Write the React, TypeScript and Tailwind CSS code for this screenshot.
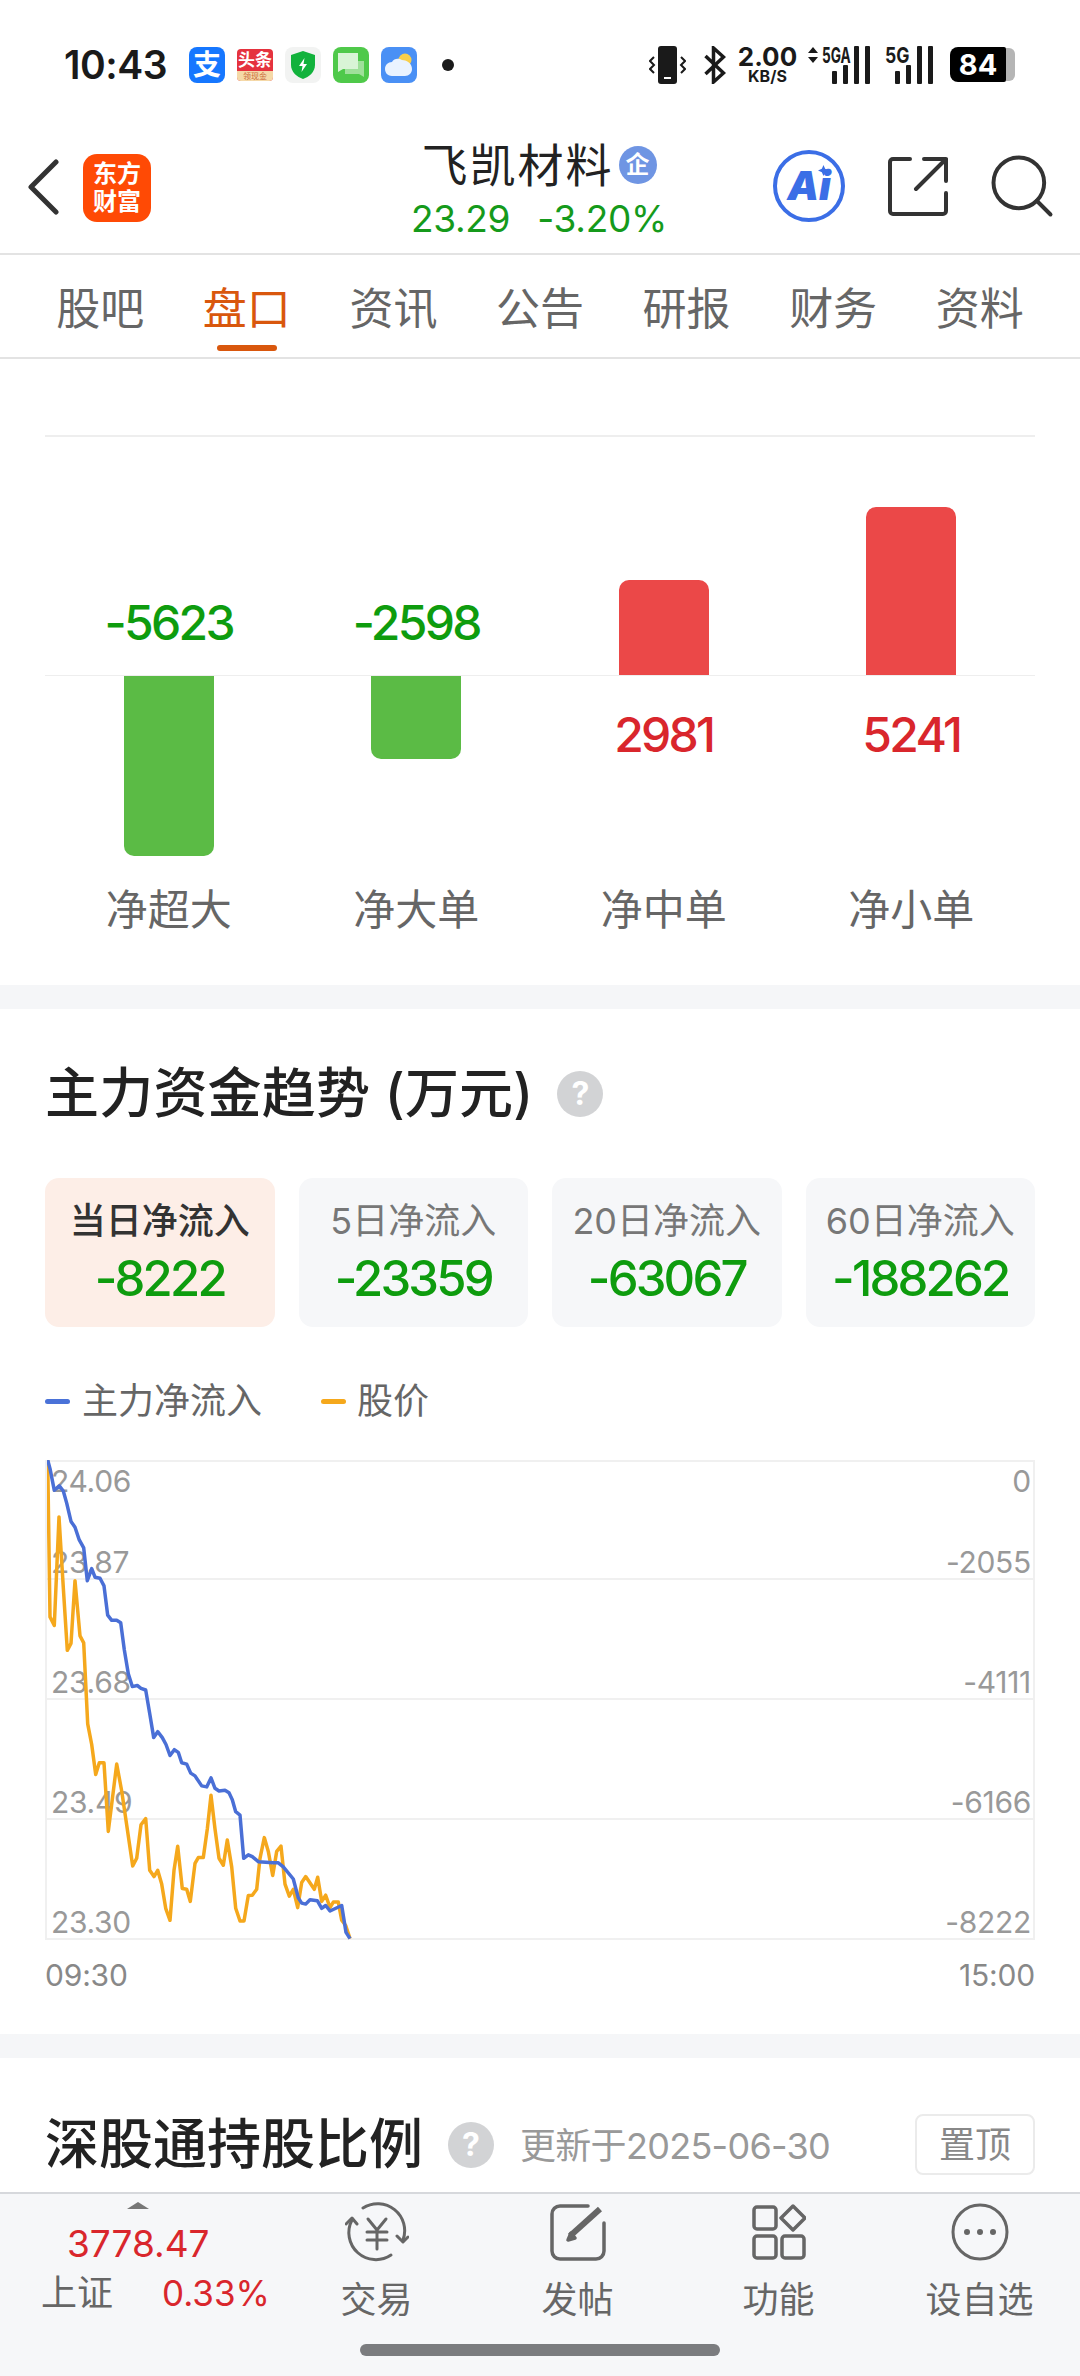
import React from 'react';
import { Search } from 'lucide-react';

const TABS = ['股吧', '盘口', '资讯', '公告', '研报', '财务', '资料'];

const FLOWS = [
  { label: '净超大', value: -5623, height: 180 },
  { label: '净大单', value: -2598, height: 83 },
  { label: '净中单', value: 2981, height: 95 },
  { label: '净小单', value: 5241, height: 168 },
];

const CARDS = [
  { label: '当日净流入', value: '-8222', active: true },
  { label: '5日净流入', value: '-23359', active: false },
  { label: '20日净流入', value: '-63067', active: false },
  { label: '60日净流入', value: '-188262', active: false },
];

const NET_LINE = '78,60 85,85 98,148 113,135 125,150 135,185 148,238 160,255 172,290 186,315 197,410 210,375 220,400 235,403 247,425 258,510 270,525 285,525 297,532 308,610 320,680 332,717 347,714 358,722 372,727 385,800 396,865 408,848 422,865 433,885 445,917 458,900 470,908 480,938 495,942 507,968 520,976 540,1005 555,1008 568,982 580,1012 592,1020 610,1018 622,1025 632,1045 642,1080 655,1090 666,1215 680,1205 692,1210 710,1225 755,1228 770,1228 785,1240 815,1275 830,1330 840,1345 852,1348 865,1335 887,1338 900,1360 912,1352 925,1368 960,1352 973,1430 985,1448';
const PRICE_LINE = '78,60 85,515 98,540 112,225 125,430 137,612 148,592 160,410 175,570 186,590 198,825 210,885 222,972 233,938 247,938 260,1137 285,942 300,1020 333,1237 345,1215 358,1118 372,1100 384,1250 397,1268 408,1250 420,1290 432,1360 445,1395 457,1250 468,1180 482,1303 495,1305 506,1340 520,1230 530,1213 545,1213 557,1130 568,1032 580,1130 592,1215 605,1235 617,1162 630,1240 642,1360 655,1397 667,1397 680,1323 692,1322 705,1305 715,1215 728,1155 740,1195 753,1265 765,1195 778,1180 790,1290 803,1325 815,1305 828,1358 840,1285 852,1268 878,1305 888,1270 900,1340 912,1322 925,1358 935,1342 950,1342 960,1395 972,1410 985,1448';

const toChart = (line: string) =>
  line
    .split(' ')
    .map((p) => {
      const [x, y] = p.split(',').map(Number);
      return `${((x - 76) / 3).toFixed(1)},${((y - 60) / 2.9).toFixed(1)}`;
    })
    .join(' ');

const Signal = () => (
  <svg width="38" height="38" viewBox="0 0 38 38" fill="#1a1a1a">
    <rect x="0" y="25" width="5" height="13" rx="1" />
    <rect x="11" y="19" width="5" height="19" rx="1" />
    <rect x="22" y="0" width="5" height="38" rx="1" />
    <rect x="33" y="0" width="5" height="38" rx="1" />
  </svg>
);

const StatusBar = () => (
  <div className="h-[131px] relative flex items-center pl-[64px] pr-[65px] pb-[2px]">
    <span className="text-[39px] font-semibold text-[#1a1a1a] leading-none w-[125px] tracking-[-0.5px]">10:43</span>
    <div className="flex items-center gap-[12px]">
      <div className="w-[36px] h-[36px] rounded-[8px] bg-[#1677ff] text-white text-[28px] font-bold leading-none flex items-center justify-center">支</div>
      <div className="w-[36px] h-[32px] rounded-[4px] bg-[#e5323e] text-white flex flex-col items-center overflow-hidden">
        <span className="text-[17px] font-bold leading-[22px]">头条</span>
        <span className="w-full bg-[#f5d9a8] text-[#c96a3a] text-[8px] leading-[10px] text-center">领现金</span>
      </div>
      <div className="w-[36px] h-[36px] rounded-[8px] bg-[#f2f3f2] flex items-center justify-center">
        <svg width="26" height="30" viewBox="0 0 26 30">
          <path d="M13 1 L25 5 V15 C25 22 19 27 13 29 C7 27 1 22 1 15 V5 Z" fill="#12b23c" />
          <path d="M14.5 8 L9 16 H12.5 L11.5 22 L17 14 H13.5 Z" fill="#fff" />
        </svg>
      </div>
      <div className="w-[36px] h-[36px] rounded-[8px] bg-[#4fc94a] flex items-center justify-center">
        <svg width="28" height="26" viewBox="0 0 28 26">
          <path d="M8 9 H27 V20 L27 25 L22 22 H8 Z" fill="#9fe09a" />
          <path d="M1 1 H21 V17 H6 L1 20 Z" fill="#d9f4d6" />
        </svg>
      </div>
      <div className="w-[36px] h-[36px] rounded-[8px] bg-[#4a90f5] flex items-center justify-center">
        <svg width="30" height="26" viewBox="0 0 30 26">
          <circle cx="21" cy="8" r="6.5" fill="#f8cf4c" />
          <path d="M8 24 C3 24 1 20 1 17 C1 13 4 10 8 10 C10 6 15 6 18 8 C22 8 28 11 28 17 C28 21 25 24 21 24 Z" fill="#eaf3ff" />
        </svg>
      </div>
      <div className="ml-[13px] w-[12px] h-[12px] rounded-full bg-[#1a1a1a]" />
    </div>
    <div className="ml-auto flex items-center">
      <svg width="37" height="38" viewBox="0 0 37 38">
        <rect x="9" y="0" width="19" height="38" rx="3" fill="#1a1a1a" />
        <rect x="15" y="31" width="7" height="2" fill="#fff" />
        <path d="M5 11 L1 15 L5 19 L1 23 L5 27 M32 11 L36 15 L32 19 L36 23 L32 27" stroke="#1a1a1a" strokeWidth="2" fill="none" />
      </svg>
      <svg className="ml-[17px]" width="23" height="38" viewBox="0 0 22 38">
        <path d="M2 10 L20 27 L10 36 V2 L20 11 L2 28" stroke="#1a1a1a" strokeWidth="3.5" fill="none" />
      </svg>
      <div className="ml-[13px] w-[57px] flex flex-col items-center text-[#1a1a1a] font-bold">
        <span className="text-[26px] leading-[23px]">2.00</span>
        <span className="text-[16px] leading-[16px]">KB/S</span>
      </div>
      <div className="ml-[12px] relative w-[62px] h-[38px]">
        <svg className="absolute left-0 top-[1px]" width="10" height="16" viewBox="0 0 10 16" fill="#1a1a1a">
          <path d="M5 0 L10 6 H0 Z M0 10 H10 L5 16 Z" />
        </svg>
        <span className="absolute left-[14px] top-[-3px] text-[22px] leading-[24px] font-bold origin-left scale-x-[0.62] text-[#1a1a1a]">5GA</span>
        <div className="absolute left-[24px] top-0"><Signal /></div>
      </div>
      <div className="ml-[15px] relative w-[48px] h-[38px]">
        <span className="absolute left-0 top-[-3px] text-[22px] leading-[24px] font-bold origin-left scale-x-[0.8] text-[#1a1a1a]">5G</span>
        <div className="absolute left-[10px] top-0"><Signal /></div>
      </div>
      <div className="ml-[17px] flex items-center">
        <div className="w-[56px] h-[35px] bg-black rounded-l-[8px] rounded-r-[2px] text-white text-[29px] font-bold leading-none flex items-center justify-center">84</div>
        <div className="w-[9px] h-[33px] bg-[#b5b5b5] rounded-r-[6px]" />
      </div>
    </div>
  </div>
);

const Header = () => (
  <div className="h-[124px] relative flex items-center border-b-2 border-[#e3e3e3] pb-[4px]">
    <svg className="ml-[27px] mt-[-6px] shrink-0" width="32" height="56" viewBox="0 0 32 56" fill="none" stroke="#333" strokeWidth="5" strokeLinecap="round" strokeLinejoin="round">
      <path d="M29 3 L4 28 L29 53" />
    </svg>
    <div className="ml-[24px] mt-[-4px] w-[68px] h-[68px] rounded-[14px] bg-[#ff4a05] text-white font-bold text-[24px] leading-[28px] flex flex-col items-center justify-center">
      <span>东方</span>
      <span>财富</span>
    </div>
    <div className="ml-[261px] w-[254px] flex flex-col items-center">
      <div className="flex items-center">
        <span className="text-[46px] leading-[54px] text-[#222] tracking-[2px]">飞凯材料</span>
        <span className="ml-[5px] w-[38px] h-[38px] rounded-full bg-[#6f95e3] text-white text-[24px] font-bold leading-none flex items-center justify-center">企</span>
      </div>
      <div className="flex items-center gap-[27px] text-[37px] mt-[3px] leading-[48px] text-[#159a1b] tracking-[-0.3px]">
        <span>23.29</span>
        <span>-3.20%</span>
      </div>
    </div>
    <div className="ml-[107px] mt-[-8px] w-[72px] h-[72px] rounded-full border-[4px] border-[#3b6ee6] flex items-center justify-center relative shrink-0">
      <span className="text-[40px] font-black italic text-[#3b6ee6] leading-none">Ai</span>
      <svg className="absolute right-[12px] top-[11px]" width="11" height="11" viewBox="0 0 10 10" fill="#3b6ee6">
        <path d="M5 0 L6.5 3.5 L10 5 L6.5 6.5 L5 10 L3.5 6.5 L0 5 L3.5 3.5 Z" />
      </svg>
    </div>
    <svg className="ml-[43px] mt-[-8px] shrink-0" width="60" height="60" viewBox="0 0 60 60" fill="none" stroke="#333" strokeWidth="4" strokeLinecap="round" strokeLinejoin="round">
      <path d="M22 3 H5 A3 3 0 0 0 2 6 V55 A3 3 0 0 0 5 58 H55 A3 3 0 0 0 58 55 V37" />
      <path d="M36 3 H58 V25 M58 3 L28 33" />
    </svg>
    <Search className="ml-[36px] mt-[-8px] w-[76px] h-[76px] text-[#333] shrink-0" strokeWidth={1.25} />
  </div>
);

const Tabs = () => (
  <div className="h-[104px] grid grid-cols-7 px-[27px] border-b-2 border-[#e3e3e3]">
    {TABS.map((tab, i) => (
      <div key={tab} className="relative flex items-center justify-center pt-[6px]">
        <span className={`text-[44px] leading-none ${i === 1 ? 'text-[#d9570d]' : 'text-[#666]'}`}>{tab}</span>
        {i === 1 && <div className="absolute bottom-[6px] w-[60px] h-[6px] rounded-full bg-[#d9570d]" />}
      </div>
    ))}
  </div>
);

const FlowBars = () => (
  <div className="h-[626px] px-[45px] pt-[76px]">
    <div className="border-t-2 border-[#eeeeee] h-[241px] border-b grid grid-cols-4">
      {FLOWS.map((f) => (
        <div key={f.label} className="flex flex-col items-center justify-end">
          {f.value > 0 ? (
            <div className="w-[90px] rounded-t-[10px] bg-[#eb4848]" style={{ height: f.height }} />
          ) : (
            <span className="text-[48px] font-medium leading-none text-[#0e9c0e] mb-[28px] tracking-[-2.7px]">{f.value}</span>
          )}
        </div>
      ))}
    </div>
    <div className="h-[180px] grid grid-cols-4">
      {FLOWS.map((f) => (
        <div key={f.label} className="flex flex-col items-center">
          {f.value < 0 ? (
            <div className="w-[90px] rounded-b-[10px] bg-[#5bbb45]" style={{ height: f.height }} />
          ) : (
            <span className="text-[48px] font-medium leading-none text-[#d9262c] mt-[35px] tracking-[-2.7px]">{f.value}</span>
          )}
        </div>
      ))}
    </div>
    <div className="grid grid-cols-4 mt-[32px]">
      {FLOWS.map((f) => (
        <span key={f.label} className="text-center text-[42px] leading-[44px] text-[#666]">{f.label}</span>
      ))}
    </div>
  </div>
);

const HelpDot = () => (
  <span className="w-[46px] h-[46px] rounded-full bg-[#d2d3d5] text-white text-[32px] font-bold leading-none flex items-center justify-center shrink-0">?</span>
);

const AxisLabel = ({ children }: { children: React.ReactNode }) => (
  <span className="text-[30px] leading-[32px] text-[#999] tracking-[-0.3px]">{children}</span>
);

const ChartRow = ({ left, right, first }: { left: string; right: string; first?: boolean }) => (
  <div className={`h-[120px] border-b-2 border-[#f0f0f0] flex justify-between items-end pl-[4px] pr-[2px] ${first ? 'border-t-2' : ''}`}>
    <AxisLabel>{left}</AxisLabel>
    <AxisLabel>{right}</AxisLabel>
  </div>
);

const FundTrend = () => (
  <div className="h-[1025px] px-[45px] pt-[56px]">
    <div className="flex items-center h-[58px]">
      <h2 className="text-[54px] font-medium leading-none text-[#222] tracking-[0.2px]">主力资金趋势 (万元)</h2>
      <div className="ml-[24px]"><HelpDot /></div>
    </div>
    <div className="grid grid-cols-4 gap-6 mt-[55px]">
      {CARDS.map((c) => (
        <div key={c.label} className={`h-[149px] rounded-[14px] flex flex-col items-center justify-center ${c.active ? 'bg-[#fdeee7]' : 'bg-[#f6f7f9]'}`}>
          <span className={`text-[36px] leading-[44px] ${c.active ? 'text-[#333] font-medium' : 'text-[#777]'}`}>{c.label}</span>
          <span className="text-[49px] font-medium leading-[54px] mt-[9px] text-[#0e9c0e] tracking-[-2.8px]">{c.value}</span>
        </div>
      ))}
    </div>
    <div className="flex items-center mt-[54px] h-[40px] text-[36px] text-[#666]">
      <div className="w-[25px] h-[5px] rounded-full bg-[#4a72d8]" />
      <span className="ml-[12px] w-[239px]">主力净流入</span>
      <div className="w-[25px] h-[5px] rounded-full bg-[#f5a81c]" />
      <span className="ml-[11px]">股价</span>
    </div>
    <div className="relative mt-[39px] border-l-2 border-r-2 border-[#f0f0f0]">
      <div className="absolute left-[4px] right-[2px] top-[5px] flex justify-between">
        <AxisLabel>24.06</AxisLabel>
        <AxisLabel>0</AxisLabel>
      </div>
      <ChartRow first left="23.87" right="-2055" />
      <ChartRow left="23.68" right="-4111" />
      <ChartRow left="23.49" right="-6166" />
      <ChartRow left="23.30" right="-8222" />
      <svg className="absolute left-0 top-0" width="987" height="480" viewBox="0 0 987 480" fill="none" strokeWidth="3.5" strokeLinejoin="round">
        <polyline points={toChart(PRICE_LINE)} stroke="#f5a81c" />
        <polyline points={toChart(NET_LINE)} stroke="#4a6fd6" />
      </svg>
    </div>
    <div className="flex justify-between mt-[17px] text-[30px] leading-[36px] text-[#888] tracking-[-0.2px]">
      <span>09:30</span>
      <span>15:00</span>
    </div>
  </div>
);

const HoldRatio = () => (
  <div className="flex-1 px-[45px] pt-[56px] flex items-start">
    <div className="flex items-center h-[61px] flex-1">
      <h2 className="text-[54px] font-medium leading-none text-[#222]">深股通持股比例</h2>
      <div className="ml-[25px]"><HelpDot /></div>
      <span className="ml-[26px] text-[36px] text-[#999] tracking-[-0.7px] pt-[2px]">更新于2025-06-30</span>
    </div>
    <div className="w-[120px] h-[61px] rounded-[8px] border-2 border-[#ebebeb] text-[36px] leading-none text-[#888] flex items-center justify-center">置顶</div>
  </div>
);

const NavItem = ({ label, children }: { label: string; children: React.ReactNode }) => (
  <div className="w-[201px] flex flex-col items-center pt-[8px]">
    <div className="h-[60px] flex items-center justify-center">{children}</div>
    <span className="text-[36px] leading-[44px] mt-[16px] text-[#666]">{label}</span>
  </div>
);

const Footer = () => (
  <div className="h-[184px] relative shrink-0 bg-[#f6f7f9] border-t-2 border-[#d6d8dc] flex">
    <div className="w-[276px] relative">
      <div className="absolute left-[127px] top-[8px] w-0 h-0 border-l-[11px] border-r-[11px] border-b-[7px] border-l-transparent border-r-transparent border-b-[#777]" />
      <div className="pl-[67px] pt-[28px] text-[37px] leading-[44px] text-[#d9262c]">3778.47</div>
      <div className="pl-[41px] mt-[5px] flex items-center h-[44px] whitespace-nowrap">
        <span className="text-[36px] text-[#666]">上证</span>
        <span className="ml-[49px] text-[35px] text-[#d9262c]">0.33%</span>
      </div>
    </div>
    <NavItem label="交易">
      <svg width="64" height="60" viewBox="0 0 64 60" fill="none" stroke="#666" strokeWidth="3" strokeLinecap="round" strokeLinejoin="round">
        <path d="M18 6 A27 27 0 0 1 58 38" />
        <path d="M52 34 L58 40 L63 35" />
        <path d="M46 53 A27 27 0 0 1 7 18" />
        <path d="M1 22 L7 16 L12 22" />
        <path d="M23 17 L32 28 L41 17 M22 30 H42 M22 38 H42 M32 28 V47" />
      </svg>
    </NavItem>
    <NavItem label="发帖">
      <svg width="56" height="58" viewBox="0 0 56 58" fill="none" stroke="#666" strokeWidth="3.5" strokeLinecap="round" strokeLinejoin="round">
        <path d="M38 3 H10 A8 8 0 0 0 2 11 V48 A8 8 0 0 0 10 56 H46 A8 8 0 0 0 54 48 V20" />
        <path d="M20 33 L50 6" strokeWidth="6" strokeLinecap="butt" />
        <path d="M21 30 L18 37 L25 35 Z" fill="#666" />
      </svg>
    </NavItem>
    <NavItem label="功能">
      <svg width="54" height="56" viewBox="0 0 54 56" fill="none" stroke="#666" strokeWidth="3.5" strokeLinejoin="round">
        <rect x="2" y="3" width="22" height="22" rx="3" />
        <rect x="2" y="32" width="22" height="22" rx="3" />
        <rect x="30" y="32" width="22" height="22" rx="3" />
        <path d="M41 2 L53 14 L41 26 L29 14 Z" />
      </svg>
    </NavItem>
    <NavItem label="设自选">
      <svg width="58" height="58" viewBox="0 0 58 58" fill="none" stroke="#666" strokeWidth="3">
        <circle cx="29" cy="29" r="27" />
        <circle cx="16" cy="29" r="3" fill="#666" stroke="none" />
        <circle cx="29" cy="29" r="3" fill="#666" stroke="none" />
        <circle cx="42" cy="29" r="3" fill="#666" stroke="none" />
      </svg>
    </NavItem>
    <div className="absolute left-[360px] bottom-[20px] w-[360px] h-[12px] rounded-full bg-[#7b7c7f]" />
  </div>
);

const Gap = () => <div className="h-[24px] bg-[#f5f6f8] shrink-0" />;

export default function App() {
  return (
    <div className="w-[1080px] h-[2376px] overflow-hidden flex flex-col bg-white font-[family-name:Inter,'Noto_Sans_CJK_SC',sans-serif]">
      <StatusBar />
      <Header />
      <Tabs />
      <FlowBars />
      <Gap />
      <FundTrend />
      <Gap />
      <HoldRatio />
      <Footer />
    </div>
  );
}
